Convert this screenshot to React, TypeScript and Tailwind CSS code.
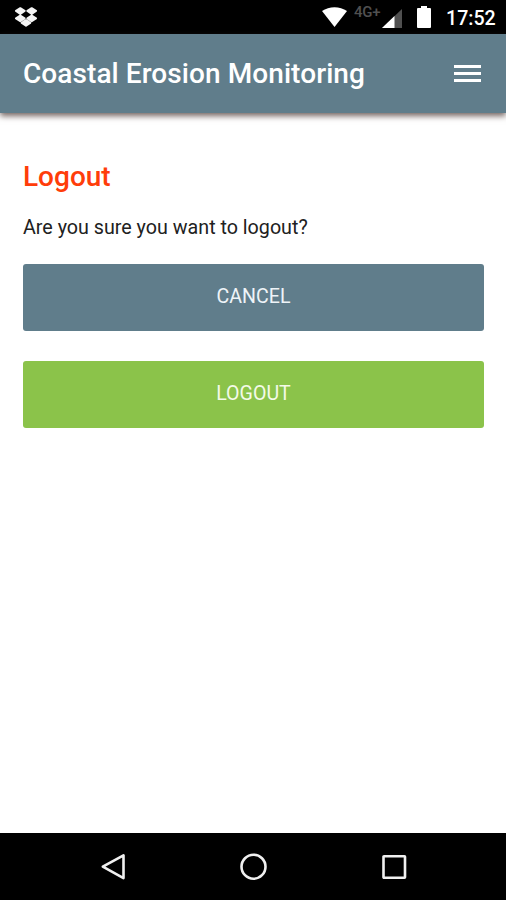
const StatusBar = () => (
  <div className="flex h-[34px] shrink-0 items-start bg-black pl-[14px] pr-[9px]">
    <svg className="mt-[7px] h-5 w-6" viewBox="0 0 24 20" fill="#f5f5f5" stroke="#f5f5f5" strokeWidth="2" strokeLinejoin="round">
      <path d="M6.3 1.2 10.6 3.9 6.3 6.8 2 3.9ZM17.7 1.2 22 3.9 17.7 6.8 13.4 3.9ZM6.3 8.5 10.6 11.4 6.3 14.2 2 11.4ZM17.7 8.5 22 11.4 17.7 14.2 13.4 11.4ZM12 13.2 16.2 15.9 12 18.8 7.8 15.9Z" />
    </svg>

    <div className="ml-auto flex items-start">
      <svg className="mt-[7px] h-5 w-[25px]" viewBox="0 0 25 20" fill="#fff">
        <path d="M0 4C7.2-1.1 17.8-1.1 25 4L12.5 20Z" />
      </svg>
      <span className="ml-[7px] mt-[3px] w-[27px] whitespace-nowrap text-[15px] font-medium leading-[18px] tracking-[-0.3px] text-[#505050]">
        4G+
      </span>
      <svg className="ml-[1px] mt-[9px] h-[19px] w-5" viewBox="0 0 20 19">
        <path d="M0 19 20 0V19Z" fill="#505050" />
        <path d="M0 19 12.5 7.1V19Z" fill="#fff" />
      </svg>
      <svg className="ml-[15px] mt-[6px] h-[22px] w-[14px]" viewBox="0 0 14 22" fill="#fff">
        <path d="M4 0H10V2H13Q14 2 14 3V21Q14 22 13 22H1Q0 22 0 21V3Q0 2 1 2H4Z" />
      </svg>
      <span className="ml-[15px] mt-[7px] w-[51px] whitespace-nowrap text-[19.6px] font-medium leading-6 text-white">
        17:52
      </span>
    </div>
  </div>
);

const Header = () => (
  <header className="relative flex h-[79px] shrink-0 items-center justify-between bg-[#607d8b] pl-[23px] pr-[25px] shadow-[0_3px_6px_rgba(70,50,45,0.75)]">
    <h1 className="whitespace-nowrap text-[28px] font-medium leading-8 tracking-[0.08px] text-white">
      Coastal Erosion Monitoring
    </h1>
    <button aria-label="Menu" className="flex w-[27px] flex-col gap-1">
      <span className="h-[3px] bg-white" />
      <span className="h-[3px] bg-white" />
      <span className="h-[3px] bg-white" />
    </button>
  </header>
);

const NavigationBar = () => (
  <nav className="flex h-[67px] shrink-0 items-center justify-between bg-black pl-[100px] pr-[98px]">
    <svg className="h-7 w-7" viewBox="0 0 28 28" fill="none" stroke="#f0f0f0" strokeWidth="2.6">
      <path d="M2.8 13.7 23.5 2.3V25.1Z" strokeLinejoin="round" />
    </svg>
    <svg className="h-7 w-7" viewBox="0 0 28 28" fill="none" stroke="#f0f0f0" strokeWidth="2.6">
      <circle cx="13.5" cy="13.7" r="12" />
    </svg>
    <svg className="h-7 w-7" viewBox="0 0 28 28" fill="none" stroke="#f0f0f0" strokeWidth="2.6">
      <rect x="3.5" y="3.2" width="21.5" height="21.5" rx="0.5" />
    </svg>
  </nav>
);

const App = () => {
  return (
    <div className="flex h-screen flex-col overflow-hidden bg-white font-[Roboto,sans-serif]">
      <StatusBar />
      <Header />
      <main className="flex-1 pl-[23px] pr-[22px] pt-[48px]">
        <h2 className="text-[28px] font-medium leading-8 text-[#ff3d0a]">Logout</h2>
        <p className="mt-[23px] text-[19.7px] leading-6 text-[#212121]">
          Are you sure you want to logout?
        </p>
        <button className="mt-6 flex h-[67px] w-full items-center justify-center rounded-[3px] bg-[#607d8b] pb-px text-[19.6px] text-[#eef4f8]">
          CANCEL
        </button>
        <button className="mt-[30px] flex h-[67px] w-full items-center justify-center rounded-[3px] bg-[#8bc34a] pb-px text-[19.6px] text-[#f4fae8]">
          LOGOUT
        </button>
      </main>
      <NavigationBar />
    </div>
  );
};

export default App;
